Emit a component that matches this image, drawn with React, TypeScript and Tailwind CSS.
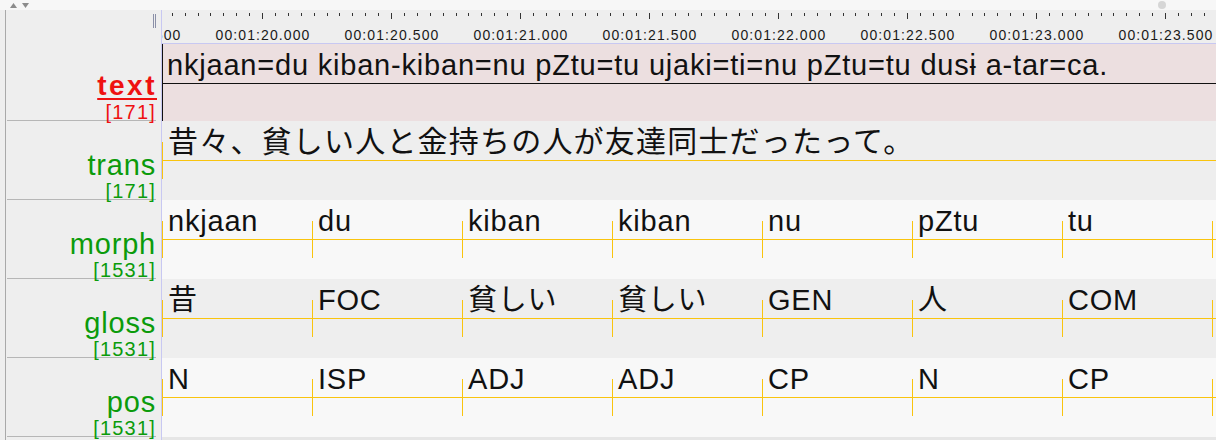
import type { ReactNode } from "react";

/* ================= DATA ================= */
const morphs = ["nkjaan", "du", "kiban", "kiban", "nu", "pZtu", "tu", ""];
const glosses = ["昔", "FOC", "貧しい", "貧しい", "GEN", "人", "COM", ""];
const poses = ["N", "ISP", "ADJ", "ADJ", "CP", "N", "CP", ""];

const rulerLabels = [
    "00:01:19.500",
    "00:01:20.000",
    "00:01:20.500",
    "00:01:21.000",
    "00:01:21.500",
    "00:01:22.000",
    "00:01:22.500",
    "00:01:23.000",
    "00:01:23.500",
];

// ruler panel starts at x=162, first full second mark at x=263
const MAJOR_X = 101;
const TICK = 12.9;
const YELLOW = "bg-[#f9c40e]";

function TopBar() {
    return (
        <div className="h-[10px] bg-[#f7f7f7] flex items-center pl-[10px] gap-[5px]">
            <svg width="7" height="5" viewBox="0 0 7 5">
                <polygon points="3.5,0 7,5 0,5" fill="#8c8c8c" />
            </svg>
            <svg width="7" height="5" viewBox="0 0 7 5">
                <polygon points="0,0 7,0 3.5,5" fill="#8c8c8c" />
            </svg>
            <div className="ml-auto mr-[50px] w-[8px] h-[8px] rounded-full bg-[#d6d6d6]" />
        </div>
    );
}

function Ruler() {
    const ticks = [];
    for (let k = -8; k <= 74; k++) ticks.push(k);

    return (
        <div className="flex h-[34px]">
            {/* splitter handle */}
            <div className="w-[155px] shrink-0 flex justify-end items-start pt-[4px] pr-[5px] gap-[1px]">
                <div className="w-px h-[14px] bg-[#8b90a8]" />
                <div className="w-px h-[14px] bg-[#8b90a8]" />
            </div>
            <div className="flex-1 relative overflow-hidden bg-[#eeeeee] border-l border-b border-[#c8c8f2]">
                {ticks.map((k) => (
                    <div
                        key={k}
                        className={`absolute top-[3px] w-px bg-[#333] ${k % 10 === 0 ? "h-[6px]" : "h-[3px]"}`}
                        style={{ left: Math.round(MAJOR_X + TICK * k) - 1 }}
                    />
                ))}
                {rulerLabels.map((t, i) => (
                    <div
                        key={t}
                        className="absolute top-[17px] leading-[16px] -translate-x-1/2 whitespace-nowrap text-[14px] tracking-[1.1px] text-[#1a1a1a]"
                        style={{ left: MAJOR_X + 129 * (i - 1) }}
                    >
                        {t}
                    </div>
                ))}
            </div>
        </div>
    );
}

/* ================= TIER ROW ================= */
function Label({ name, count, active }: { name: string; count: string; active?: boolean }) {
    return (
        <div className="w-[155px] shrink-0 pl-[1px] pr-[5px]">
            <div className="h-full flex flex-col justify-end items-end border-b border-[#b6b6b6]">
                {active ? (
                    <div className="text-[28px] leading-[28px] mb-[4px] font-bold tracking-[2.5px] mr-[-1px] text-[#ee1111] underline decoration-2 underline-offset-[3px]">
                        {name}
                    </div>
                ) : (
                    <div className="text-[29px] leading-[28px] mb-[4px] tracking-[0.8px] text-[#0b9b0b]">
                        {name}
                    </div>
                )}
                <div
                    className={`text-[20px] leading-[16px] tracking-[1.2px] ${active ? "text-[#ee1111]" : "text-[#0b9b0b]"}`}
                >
                    {count}
                </div>
            </div>
        </div>
    );
}

function TierRow({
    name,
    count,
    active,
    height,
    bg,
    lineColor,
    children,
}: {
    name: string;
    count: string;
    active?: boolean;
    height: string;
    bg: string;
    lineColor: string;
    children: ReactNode;
}) {
    return (
        <div className={`flex ${height}`}>
            <Label name={name} count={count} active={active} />
            <div className={`flex-1 relative overflow-hidden border-l border-[#c8c8f2] ${bg}`}>
                <div className={`absolute left-0 right-0 top-[39px] h-px ${lineColor}`} />
                {children}
            </div>
        </div>
    );
}

function Segments({ items }: { items: string[] }) {
    return (
        <div className="flex">
            {items.map((w, i) => (
                <div key={i} className="relative w-[150px] shrink-0 h-[79px]">
                    <div className={`absolute left-0 top-[21px] h-[37px] w-px ${YELLOW}`} />
                    <div className="pl-[6px] pt-[5px] text-[29px] leading-[32px] tracking-[0.8px] text-[#111] whitespace-nowrap">
                        {w}
                    </div>
                </div>
            ))}
        </div>
    );
}

export default function App() {
    return (
        <div className="w-[1216px] h-[440px] overflow-hidden bg-[#eeeeee] font-['Liberation_Sans','Noto_Sans_CJK_JP',sans-serif]">
            <TopBar />
            <div className="flex">
                <div className="w-[5px] shrink-0" />
                <div className="w-px shrink-0 bg-[#a9a9a9]" />
                <div className="flex-1 flex flex-col">
                    <Ruler />

                    {/* ===== text ===== */}
                    <TierRow name="text" count="[171]" active height="h-[77px]" bg="bg-[#ecdfe0]" lineColor="bg-[#111]">
                        <div className="absolute left-0 top-0 bottom-0 w-px bg-[#111]" />
                        <div className="pl-[5px] pt-[5px] text-[29px] leading-[32px] tracking-[0.8px] text-[#111] whitespace-nowrap">
                            nkjaan=du kiban-kiban=nu pZtu=tu ujaki=ti=nu pZtu=tu dusɨ a-tar=ca.
                        </div>
                    </TierRow>

                    {/* ===== trans ===== */}
                    <TierRow name="trans" count="[171]" height="h-[79px]" bg="bg-[#eeeeee]" lineColor={YELLOW}>
                        <div className={`absolute left-0 top-[21px] h-[37px] w-px ${YELLOW}`} />
                        <div className="pl-[6px] pt-[5px] text-[30px] leading-[32px] tracking-[1.2px] text-[#111] whitespace-nowrap">
                            昔々、貧しい人と金持ちの人が友達同士だったって。
                        </div>
                    </TierRow>

                    <TierRow name="morph" count="[1531]" height="h-[79px]" bg="bg-[#f8f8f8]" lineColor={YELLOW}>
                        <Segments items={morphs} />
                    </TierRow>

                    <TierRow name="gloss" count="[1531]" height="h-[79px]" bg="bg-[#eeeeee]" lineColor={YELLOW}>
                        <Segments items={glosses} />
                    </TierRow>

                    <TierRow name="pos" count="[1531]" height="h-[79px]" bg="bg-[#f8f8f8]" lineColor={YELLOW}>
                        <Segments items={poses} />
                    </TierRow>

                    <div className="flex h-[10px]">
                        <div className="w-[155px] shrink-0" />
                        <div className="flex-1 border-l border-[#c8c8f2] bg-[#e6e6e6]" />
                    </div>
                </div>
            </div>
        </div>
    );
}
